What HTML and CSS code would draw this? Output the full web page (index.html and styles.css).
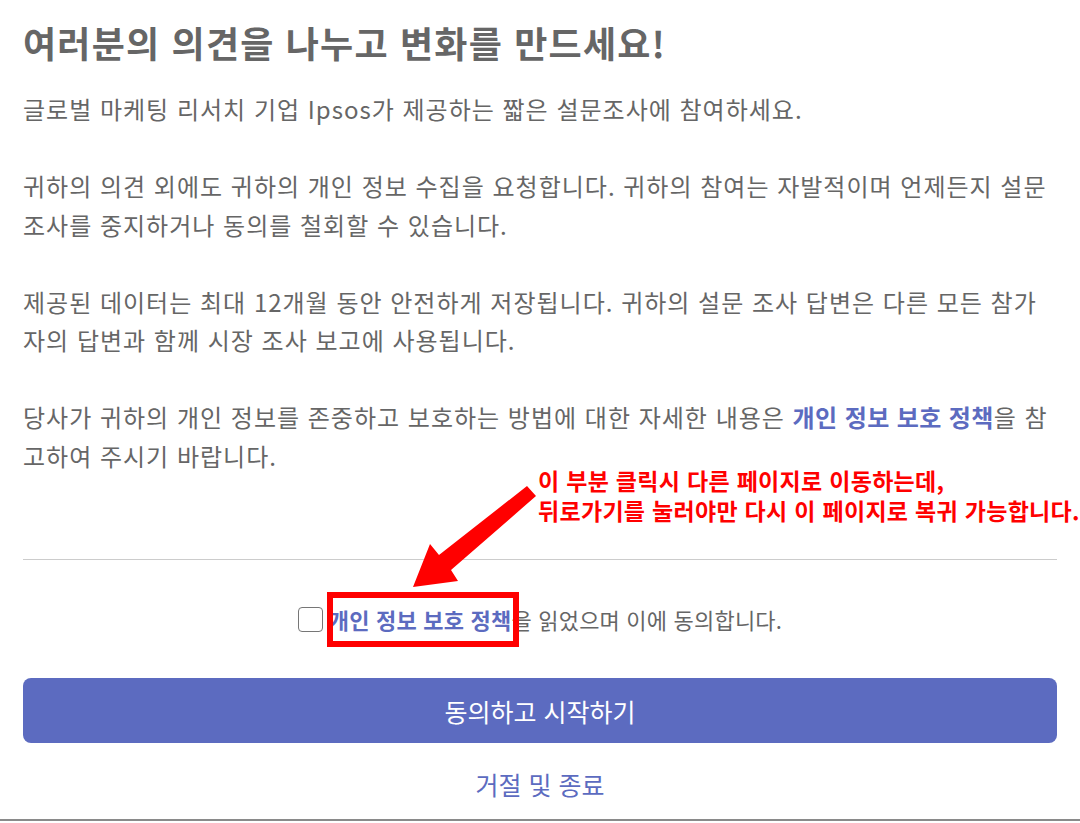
FILE: index.html
```html
<!DOCTYPE html>
<html lang="ko">
<head>
<meta charset="utf-8">
<title>Ipsos</title>
<link rel="stylesheet" href="styles.css">
</head>
<body>
<div class="page">
  <h1 class="title">여러분의 의견을 나누고 변화를 만드세요!</h1>
  <div class="copy">
    <p>글로벌 마케팅 리서치 기업 Ipsos가 제공하는 짧은 설문조사에 참여하세요.</p>
    <p>귀하의 의견 외에도 귀하의 개인 정보 수집을 요청합니다. 귀하의 참여는 자발적이며 언제든지 설문조사를 중지하거나 동의를 철회할 수 있습니다.</p>
    <p>제공된 데이터는 최대 12개월 동안 안전하게 저장됩니다. 귀하의 설문 조사 답변은 다른 모든 참가자의 답변과 함께 시장 조사 보고에 사용됩니다.</p>
    <p>당사가 귀하의 개인 정보를 존중하고 보호하는 방법에 대한 자세한 내용은 <a class="link link-tight" href="#">개인 정보 보호 정책</a>을 참고하여 주시기 바랍니다.</p>
  </div>
  <hr class="divider">
  <label class="consent">
    <span class="box"></span>
    <span class="consent-text"><a class="link" href="#">개인 정보 보호 정책</a>을 읽었으며 이에 동의합니다.</span>
  </label>
  <button class="primary">동의하고 시작하기</button>
  <a class="decline" href="#">거절 및 종료</a>

  <div class="note">이 부분 클릭시 다른 페이지로 이동하는데,<br>뒤로가기를 눌러야만 다시 이 페이지로 복귀 가능합니다.</div>
  <svg class="arrow" width="160" height="110" viewBox="0 0 160 110">
    <polygon fill="#ff0000" points="127,6 136,16 51,90 58,101 13,107 30,64 39,75"/>
  </svg>
  <div class="redbox"></div>
</div>
</body>
</html>
```

FILE: styles.css
```css
html, body {
  margin: 0;
  padding: 0;
  background: #ffffff;
}
body {
  font-family: "Noto Sans CJK KR", "Noto Sans", sans-serif;
  color: #666666;
}
.page {
  position: relative;
  width: 1080px;
  height: 821px;
  box-sizing: border-box;
  padding: 18px 23px 0 23px;
  border-bottom: 2px solid #8a8a8a;
  display: flex;
  flex-direction: column;
}
.title {
  margin: 0;
  font-size: 36px;
  line-height: 48px;
  font-weight: 700;
  color: #666666;
  letter-spacing: 1.2px;
}
.copy {
  margin-top: 24px;
  font-size: 24px;
  line-height: 38.5px;
  letter-spacing: 1px;
}
.copy p {
  margin: 0 0 38.5px 0;
}
.copy p:last-child {
  margin-bottom: 0;
}
.link {
  color: #5c6bc0;
  font-weight: 700;
  text-decoration: none;
}
.link-tight {
  letter-spacing: 0.4px;
}
.divider {
  margin: 84px 0 0 0;
  border: 0;
  border-top: 1px solid #cccccc;
  height: 0;
}
.consent {
  margin-top: 44px;
  display: flex;
  align-items: center;
  justify-content: center;
  gap: 6px;
  font-size: 22px;
  line-height: 30px;
  letter-spacing: 0.2px;
}
.box {
  width: 23px;
  height: 23px;
  border: 1.5px solid #767676;
  border-radius: 4px;
  background: #fff;
}
.primary {
  margin-top: 44px;
  height: 65px;
  border: 0;
  border-radius: 8px;
  background: #5c6bc0;
  color: #ffffff;
  font-family: "Noto Sans CJK KR", "Noto Sans", sans-serif;
  font-size: 25px;
  letter-spacing: 0;
}
.decline {
  margin-top: 23px;
  align-self: center;
  color: #5c6bc0;
  font-size: 25px;
  line-height: 36px;
  text-decoration: none;
}
.note {
  position: absolute;
  left: 538px;
  top: 465px;
  color: #ff0000;
  font-weight: 700;
  font-size: 23px;
  line-height: 30px;
  letter-spacing: 0.3px;
  white-space: nowrap;
}
.arrow {
  position: absolute;
  left: 400px;
  top: 480px;
}
.redbox {
  position: absolute;
  left: 327px;
  top: 592px;
  width: 180px;
  height: 43px;
  border: 6px solid #ff0000;
}
```
